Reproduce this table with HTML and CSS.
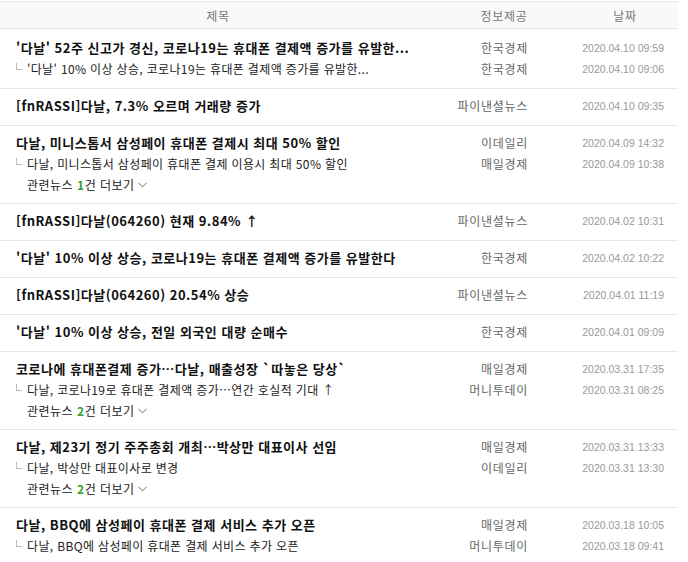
FILE: index.html
```html
<!DOCTYPE html>
<html lang="ko">
<head>
<meta charset="utf-8">
<title>뉴스 목록</title>
<link rel="stylesheet" href="styles.css">
</head>
<body>
<div class="board">
  <div class="head">
    <div class="h-title">제목</div>
    <div class="h-src">정보제공</div>
    <div class="h-date">날짜</div>
  </div>

  <div class="item first">
    <div class="line"><a class="t">'다날' 52주 신고가 경신, 코로나19는 휴대폰 결제액 증가를 유발한...</a><span class="src">한국경제</span><span class="date">2020.04.10 09:59</span></div>
    <div class="line"><a class="s"><i class="mark"></i>'다날' 10% 이상 상승, 코로나19는 휴대폰 결제액 증가를 유발한...</a><span class="src">한국경제</span><span class="date">2020.04.10 09:06</span></div>
  </div>

  <div class="item">
    <div class="line"><a class="t">[fnRASSI]다날, 7.3% 오르며 거래량 증가</a><span class="src">파이낸셜뉴스</span><span class="date">2020.04.10 09:35</span></div>
  </div>

  <div class="item">
    <div class="line"><a class="t">다날, 미니스톱서 삼성페이 휴대폰 결제시 최대 50% 할인</a><span class="src">이데일리</span><span class="date">2020.04.09 14:32</span></div>
    <div class="line"><a class="s"><i class="mark"></i>다날, 미니스톱서 삼성페이 휴대폰 결제 이용시 최대 50% 할인</a><span class="src">매일경제</span><span class="date">2020.04.09 10:38</span></div>
    <div class="line more-line"><a class="more">관련뉴스 <b>1</b>건 더보기<svg class="chev" width="9" height="6" viewBox="0 0 9 6"><path d="M0.5 0.8 L4.5 4.8 L8.5 0.8" fill="none" stroke="#999" stroke-width="1.1"/></svg></a></div>
  </div>

  <div class="item">
    <div class="line"><a class="t">[fnRASSI]다날(064260) 현재 9.84% ↑</a><span class="src">파이낸셜뉴스</span><span class="date">2020.04.02 10:31</span></div>
  </div>

  <div class="item">
    <div class="line"><a class="t">'다날' 10% 이상 상승, 코로나19는 휴대폰 결제액 증가를 유발한다</a><span class="src">한국경제</span><span class="date">2020.04.02 10:22</span></div>
  </div>

  <div class="item">
    <div class="line"><a class="t">[fnRASSI]다날(064260) 20.54% 상승</a><span class="src">파이낸셜뉴스</span><span class="date">2020.04.01 11:19</span></div>
  </div>

  <div class="item">
    <div class="line"><a class="t">'다날' 10% 이상 상승, 전일 외국인 대량 순매수</a><span class="src">한국경제</span><span class="date">2020.04.01 09:09</span></div>
  </div>

  <div class="item">
    <div class="line"><a class="t">코로나에 휴대폰결제 증가…다날, 매출성장 `따놓은 당상`</a><span class="src">매일경제</span><span class="date">2020.03.31 17:35</span></div>
    <div class="line"><a class="s"><i class="mark"></i>다날, 코로나19로 휴대폰 결제액 증가…연간 호실적 기대 ↑</a><span class="src">머니투데이</span><span class="date">2020.03.31 08:25</span></div>
    <div class="line more-line"><a class="more">관련뉴스 <b>2</b>건 더보기<svg class="chev" width="9" height="6" viewBox="0 0 9 6"><path d="M0.5 0.8 L4.5 4.8 L8.5 0.8" fill="none" stroke="#999" stroke-width="1.1"/></svg></a></div>
  </div>

  <div class="item">
    <div class="line"><a class="t">다날, 제23기 정기 주주총회 개최…박상만 대표이사 선임</a><span class="src">매일경제</span><span class="date">2020.03.31 13:33</span></div>
    <div class="line"><a class="s"><i class="mark"></i>다날, 박상만 대표이사로 변경</a><span class="src">이데일리</span><span class="date">2020.03.31 13:30</span></div>
    <div class="line more-line"><a class="more">관련뉴스 <b>2</b>건 더보기<svg class="chev" width="9" height="6" viewBox="0 0 9 6"><path d="M0.5 0.8 L4.5 4.8 L8.5 0.8" fill="none" stroke="#999" stroke-width="1.1"/></svg></a></div>
  </div>

  <div class="item last">
    <div class="line"><a class="t">다날, BBQ에 삼성페이 휴대폰 결제 서비스 추가 오픈</a><span class="src">매일경제</span><span class="date">2020.03.18 10:05</span></div>
    <div class="line"><a class="s"><i class="mark"></i>다날, BBQ에 삼성페이 휴대폰 결제 서비스 추가 오픈</a><span class="src">머니투데이</span><span class="date">2020.03.18 09:41</span></div>
  </div>
</div>
</body>
</html>
```

FILE: styles.css
```css
html, body {
  margin: 0;
  padding: 0;
  background: #fff;
}
body {
  font-family: "Noto Sans CJK KR", "Noto Sans", sans-serif;
  color: #111;
}
.board {
  width: 678px;
  margin-top: 1px;
}
.head {
  display: grid;
  grid-template-columns: 436px 136px 106px;
  height: 26px;
  align-items: center;
  background: #f9f9f9;
  border-top: 1px solid #e6e6e6;
  border-bottom: 1px solid #e6e6e6;
  font-size: 12px;
  letter-spacing: 0.7px;
  color: #777;
  text-align: center;
}
.item {
  padding: 6px 0 9px;
  border-bottom: 1px solid #e6e6e6;
}
.item.first {
  padding-top: 8px;
}
.item.last {
  border-bottom: none;
}
.line {
  display: grid;
  grid-template-columns: 436px 136px 106px;
  height: 21px;
  align-items: center;
}
.line.more-line {
  height: 20px;
}
.t {
  padding-left: 16px;
  font-size: 13px;
  font-weight: bold;
  color: #111;
  white-space: nowrap;
  letter-spacing: 0.5px;
}
.s {
  display: flex;
  align-items: center;
  padding-left: 16px;
  font-size: 12px;
  color: #222;
  white-space: nowrap;
  letter-spacing: 0.35px;
}
.mark {
  display: inline-block;
  width: 5px;
  height: 6px;
  border-left: 1px solid #bbb;
  border-bottom: 1px solid #bbb;
  margin-right: 5px;
  margin-top: -4px;
}
.more {
  display: flex;
  align-items: center;
  padding-left: 27px;
  font-size: 12px;
  color: #222;
  white-space: pre;
  letter-spacing: 0.5px;
}
.more b {
  color: #2fa52f;
  font-weight: bold;
}
.chev {
  margin-left: 3px;
  margin-top: 1px;
}
.src {
  text-align: right;
  padding-right: 44px;
  font-size: 12px;
  letter-spacing: 0.7px;
  color: #666;
}
.date {
  text-align: right;
  padding-right: 14px;
  font-family: "Liberation Sans", Arial, sans-serif;
  font-size: 10.5px;
  color: #999;
}
```
